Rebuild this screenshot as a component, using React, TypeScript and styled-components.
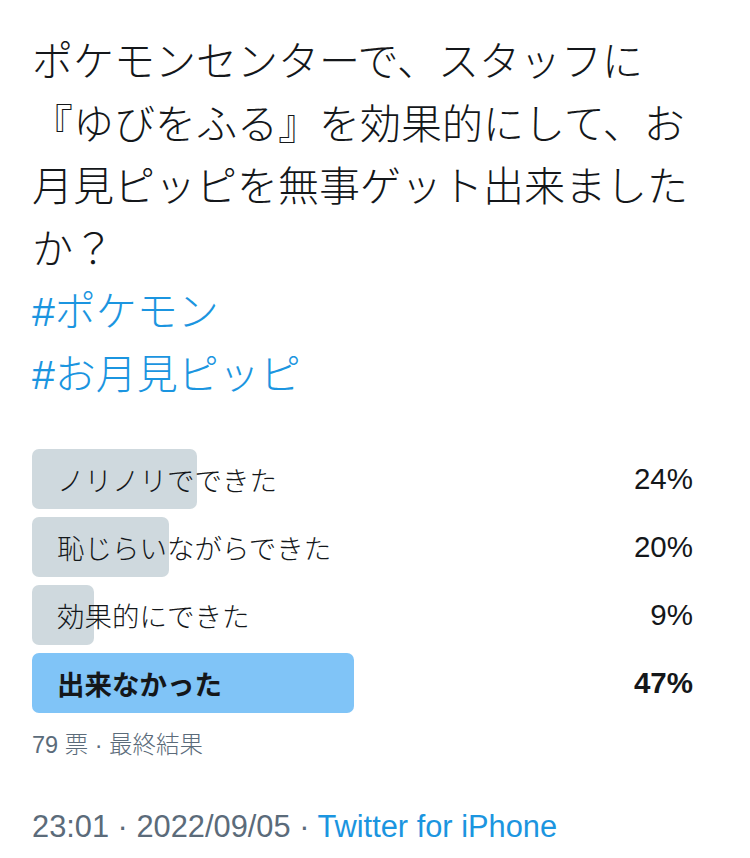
import React from "react";
import styled, { createGlobalStyle } from "styled-components";

const Global = createGlobalStyle`
  html, body { margin: 0; padding: 0; background: #ffffff; }
  body { font-family: "Liberation Sans", "Noto Sans CJK JP", sans-serif; }
`;

const Page = styled.div`
  width: 750px;
  box-sizing: border-box;
  padding: 31px 32px 0 32px;
  color: #14171a;
`;

const TweetText = styled.div`
  font-size: 41px;
  line-height: 62.6px;
  font-weight: 300;
  font-family: "Liberation Sans", "Noto Sans CJK JP", sans-serif;
  color: #14171a;
`;

const Hashtag = styled.span`
  color: #1b95e0;
`;

const Poll = styled.div`
  margin-top: 42px;
  display: flex;
  flex-direction: column;
  gap: 8px;
`;

const Row = styled.div`
  position: relative;
  height: 60px;
  display: flex;
  align-items: center;
  justify-content: space-between;
  padding: 0 25px;
`;

const Bar = styled.div<{ $winner?: boolean }>`
  position: absolute;
  left: 0;
  top: 0;
  bottom: 0;
  border-radius: 7px;
  background: ${(p) => (p.$winner ? "#80c4f7" : "#cfd9de")};
`;

const Label = styled.span<{ $winner?: boolean }>`
  position: relative;
  font-size: 27.5px;
  font-weight: ${(p) => (p.$winner ? 700 : 300)};
  color: #14171a;
`;

const Percent = styled.span<{ $winner?: boolean }>`
  position: relative;
  font-size: 29.5px;
  font-weight: ${(p) => (p.$winner ? 700 : 400)};
  color: #14171a;
`;

const Meta = styled.div`
  margin-top: 17px;
  font-size: 23.5px;
  line-height: 30px;
  font-weight: 300;
  color: #5b6b7a;
`;

const Footer = styled.div`
  margin-top: 49px;
  font-size: 30.8px;
  line-height: 36px;
  color: #5b6b7a;
`;

const Source = styled.span`
  color: #1b95e0;
`;

const options = [
  { label: "ノリノリでできた", pct: 24 },
  { label: "恥じらいながらできた", pct: 20 },
  { label: "効果的にできた", pct: 9 },
  { label: "出来なかった", pct: 47, winner: true },
];

export default function App() {
  return (
    <Page>
      <Global />
      <TweetText>
        ポケモンセンターで、スタッフに
        <br />
        『ゆびをふる』を効果的にして、お
        <br />
        月見ピッピを無事ゲット出来ました
        <br />
        か？
        <br />
        <Hashtag>#ポケモン</Hashtag>
        <br />
        <Hashtag>#お月見ピッピ</Hashtag>
      </TweetText>
      <Poll>
        {options.map((o) => (
          <Row key={o.label}>
            <Bar $winner={o.winner} style={{ width: `${o.pct}%` }} />
            <Label $winner={o.winner}>{o.label}</Label>
            <Percent $winner={o.winner}>{o.pct}%</Percent>
          </Row>
        ))}
      </Poll>
      <Meta>79 票 · 最終結果</Meta>
      <Footer>
        23:01 · 2022/09/05 · <Source>Twitter for iPhone</Source>
      </Footer>
    </Page>
  );
}
